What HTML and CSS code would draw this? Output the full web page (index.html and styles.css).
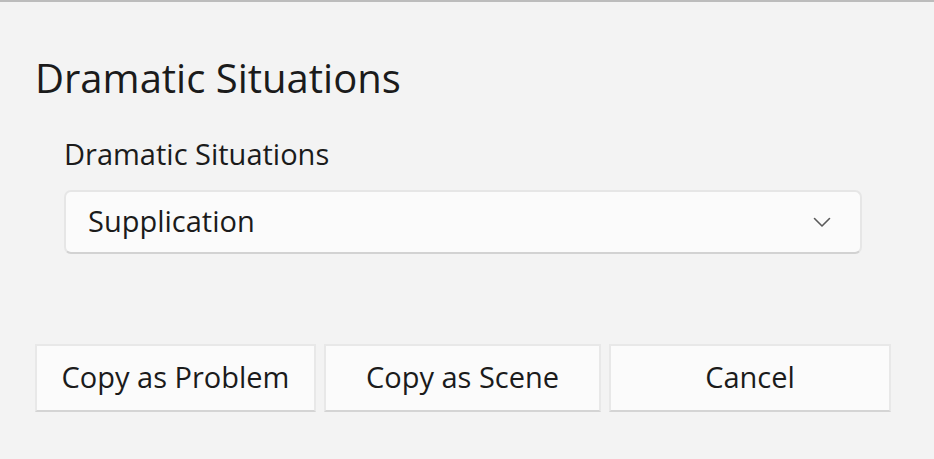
FILE: index.html
```html
<!DOCTYPE html>
<html>
<head>
<meta charset="utf-8">
<link rel="stylesheet" href="styles.css">
</head>
<body>
<div class="dialog">
  <h1 class="title">Dramatic Situations</h1>
  <div class="field">
    <div class="label">Dramatic Situations</div>
    <div class="select">
      <span class="select-text">Supplication</span>
      <svg class="chev" width="18" height="11" viewBox="0 0 18 11"><path d="M1.5 1.5 L9 9 L16.5 1.5" fill="none" stroke="#5a5a5a" stroke-width="1.6" stroke-linecap="round" stroke-linejoin="round"/></svg>
    </div>
  </div>
  <div class="buttons">
    <button class="btn">Copy as Problem</button>
    <button class="btn">Copy as Scene</button>
    <button class="btn">Cancel</button>
  </div>
</div>
</body>
</html>
```
FILE: styles.css
```css
html, body {
  margin: 0;
  padding: 0;
}
body {
  background: #f3f3f3;
  border-top: 2px solid #bcbcbc;
  height: 457px;
  font-family: "Open Sans", "Noto Sans", sans-serif;
  color: #1b1b1b;
  overflow: hidden;
}
.dialog {
  padding: 0 43px 0 35px;
}
.title {
  margin: 0;
  padding-top: 49px;
  font-size: 40px;
  font-weight: 400;
  line-height: 54px;
}
.field {
  margin: 29px 29px 0 29px;
}
.label {
  font-size: 29px;
  line-height: 40px;
}
.select {
  margin-top: 16px;
  box-sizing: border-box;
  height: 64px;
  background: #fbfbfb;
  border: 2px solid #e6e6e6;
  border-bottom-color: #d2d2d2;
  border-radius: 7px;
  display: flex;
  align-items: center;
  padding: 0 29px 0 22px;
}
.select-text {
  flex: 1;
  font-size: 29px;
  padding-bottom: 3px;
}
.chev {
  display: block;
}
.buttons {
  margin-top: 90px;
  display: grid;
  grid-template-columns: 281fr 277fr 282fr;
  gap: 8px;
}
.btn {
  height: 68px;
  background: #fbfbfb;
  border: 2px solid #e8e8e8;
  border-bottom-color: #d4d4d4;
  border-radius: 0;
  font-family: inherit;
  font-size: 29px;
  color: #1b1b1b;
  padding: 0 0 3px 0;
}
```
